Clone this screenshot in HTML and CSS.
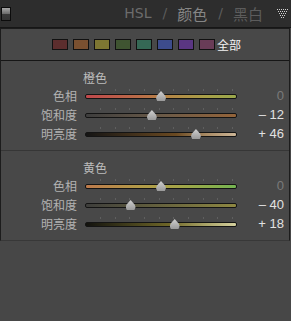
FILE: index.html
```html
<!DOCTYPE html>
<html lang="zh-CN">
<head>
  <meta charset="UTF-8">
  <meta name="viewport" content="width=device-width, initial-scale=1.0">
  <title>HSL / 颜色 / 黑白</title>
  <link rel="stylesheet" href="styles.css">
</head>
<body>

<!-- Panel header -->
<div class="header">
  <span class="toggle"></span>
  <div class="tabs">
    <span class="tab">HSL</span>
    <span class="slash">/</span>
    <span class="tab active">颜色</span>
    <span class="slash">/</span>
    <span class="tab dim">黑白</span>
  </div>
  <svg class="menu" width="11" height="9" viewBox="0 0 11 9">
    <g fill="#cfcfcf">
      <rect x="0" y="0" width="1" height="1"/><rect x="2" y="0" width="1" height="1"/><rect x="4" y="0" width="1" height="1"/><rect x="6" y="0" width="1" height="1"/><rect x="8" y="0" width="1" height="1"/><rect x="10" y="0" width="1" height="1"/>
      <rect x="1" y="2" width="1" height="1"/><rect x="3" y="2" width="1" height="1"/><rect x="5" y="2" width="1" height="1"/><rect x="7" y="2" width="1" height="1"/><rect x="9" y="2" width="1" height="1"/>
      <rect x="2" y="4" width="1" height="1"/><rect x="4" y="4" width="1" height="1"/><rect x="6" y="4" width="1" height="1"/><rect x="8" y="4" width="1" height="1"/>
      <rect x="3" y="6" width="1" height="1"/><rect x="5" y="6" width="1" height="1"/><rect x="7" y="6" width="1" height="1"/>
      <rect x="4" y="8" width="1" height="1"/><rect x="6" y="8" width="1" height="1"/>
    </g>
  </svg>
</div>

<div class="panel">
  <!-- Colour swatches -->
  <div class="swatches">
    <span class="swatch red"></span>
    <span class="swatch orange"></span>
    <span class="swatch yellow"></span>
    <span class="swatch green"></span>
    <span class="swatch aqua"></span>
    <span class="swatch blue"></span>
    <span class="swatch purple"></span>
    <span class="swatch magenta"></span>
    <span class="all">全部</span>
  </div>

  <!-- Orange -->
  <div class="section orange-set">
    <div class="title">橙色</div>
    <div class="row">
      <span class="label">色相</span>
      <div class="slider"><div class="track hue"></div><span class="thumb" style="left: 50%"></span></div>
      <span class="value zero">0</span>
    </div>
    <div class="row">
      <span class="label">饱和度</span>
      <div class="slider"><div class="track sat"></div><span class="thumb" style="left: 44%"></span></div>
      <span class="value">– 12</span>
    </div>
    <div class="row">
      <span class="label">明亮度</span>
      <div class="slider"><div class="track lum"></div><span class="thumb" style="left: 73%"></span></div>
      <span class="value">+ 46</span>
    </div>
  </div>

  <!-- Yellow -->
  <div class="section yellow-set">
    <div class="title">黄色</div>
    <div class="row">
      <span class="label">色相</span>
      <div class="slider"><div class="track hue"></div><span class="thumb" style="left: 50%"></span></div>
      <span class="value zero">0</span>
    </div>
    <div class="row">
      <span class="label">饱和度</span>
      <div class="slider"><div class="track sat"></div><span class="thumb" style="left: 30%"></span></div>
      <span class="value">– 40</span>
    </div>
    <div class="row">
      <span class="label">明亮度</span>
      <div class="slider"><div class="track lum"></div><span class="thumb" style="left: 59%"></span></div>
      <span class="value">+ 18</span>
    </div>
  </div>
</div>

</body>
</html>
```

FILE: styles.css
```css
body {
  margin: 0;
  background-color: #474747;
  font-family: "Liberation Sans", "Noto Sans CJK SC", sans-serif;
}

/* Header bar */
.header {
  height: 27px;
  background-color: #2d2d2d;
  border-bottom: 1px solid #161616;
  display: flex;
  align-items: center;
}

.toggle {
  width: 8px;
  height: 12px;
  margin-left: 1px;
  border: 1px solid #0c0c0c;
  background: linear-gradient(#a8a8a8, #6a6a6a 50%, #3a3a3a 50%, #343434);
}

.tabs {
  margin-left: auto;
  display: flex;
  align-items: center;
  color: #666;
  font-size: 15px;
  line-height: 27px;
}

.tab {
  font-family: "Noto Sans CJK SC", sans-serif;
}

.tabs .tab:first-child {
  font-family: "DejaVu Sans", sans-serif;
  font-size: 14px;
  color: #6c6c6c;
}

.tab.active {
  color: #868686;
}

.tab.dim {
  color: #5c5c5c;
}

.slash {
  margin: 0 10px 0 11px;
  font-family: "DejaVu Sans", sans-serif;
  font-size: 14px;
  color: #5c5c5c;
}

.menu {
  margin: 0 3px 0 14px;
}

/* Panel */
.panel {
  margin-right: 1px;
  border: 1px solid #1c1c1c;
  border-bottom-color: #383838;
  background-color: #484848;
}

.swatches {
  height: 31px;
  padding-left: 51px;
  display: flex;
  align-items: center;
  gap: 5px;
  border-bottom: 1px solid #161616;
}

.swatch {
  box-sizing: border-box;
  width: 16px;
  height: 11px;
  border: 1px solid #111;
}

.red { background-color: #5c2d2d; }
.orange { background-color: #7a5030; }
.yellow { background-color: #7d7632; }
.green { background-color: #3f5431; }
.aqua { background-color: #356855; }
.blue { background-color: #3d4c8c; }
.purple { background-color: #5a3682; }
.magenta { background-color: #693c57; }

.all {
  margin-left: -3px;
  color: #f2f2f2;
  font-family: "Noto Sans CJK SC", sans-serif;
  font-size: 12px;
  line-height: 16px;
}

.section {
  padding: 9px 0 7px;
}

.section + .section {
  border-top: 1px solid #363636;
}

.title {
  padding-left: 82px;
  color: #bdbdbd;
  font-family: "Noto Sans CJK SC", sans-serif;
  font-size: 12px;
  line-height: 16px;
}

.row {
  height: 19px;
  display: grid;
  grid-template-columns: 76px 152px 39px;
  column-gap: 8px;
  align-items: center;
}

.label {
  text-align: right;
  color: #b2b2b2;
  font-family: "Noto Sans CJK SC", sans-serif;
  font-size: 12px;
  line-height: 19px;
}

.slider {
  position: relative;
  height: 19px;
  display: flex;
  align-items: center;
  background: repeating-linear-gradient(90deg, #5f5f5f 0 1px, transparent 1px 14.67px) 15px 3px / 133px 2px no-repeat;
}

.track {
  box-sizing: border-box;
  width: 100%;
  height: 5px;
  margin-top: 1px;
  border: 1px solid #141414;
  border-radius: 2px;
}

.thumb {
  position: absolute;
  top: 5px;
  width: 10px;
  height: 10px;
  margin-left: -5px;
  background: linear-gradient(#d0d0d0, #9a9a9a);
  clip-path: polygon(50% 0, 90% 45%, 100% 70%, 88% 100%, 12% 100%, 0 70%, 10% 45%);
}

.value {
  text-align: right;
  color: #e2e2e2;
  font-size: 13px;
  line-height: 19px;
}

.value.zero {
  color: #7a7a7a;
}

/* Orange tracks */
.orange-set .hue { background: linear-gradient(90deg, #c0484c, #ba6c48 35%, #b58646 55%, #a8a048 80%, #9aa84c); }
.orange-set .sat { background: linear-gradient(90deg, #3e3e3e, #6a5a48 50%, #94643a); }
.orange-set .lum { background: linear-gradient(90deg, #141414, #6b4a22 60%, #a88a64 80%, #ccb596); }

/* Yellow tracks */
.yellow-set .hue { background: linear-gradient(90deg, #bd7a4c, #b29a48 35%, #a6a448 60%, #88ae4c 85%, #74b452); }
.yellow-set .sat { background: linear-gradient(90deg, #3e3e3c, #66623e 50%, #8e8842); }
.yellow-set .lum { background: linear-gradient(90deg, #12120e, #6e6628 55%, #aaa468 80%, #d4d09e); }
```
